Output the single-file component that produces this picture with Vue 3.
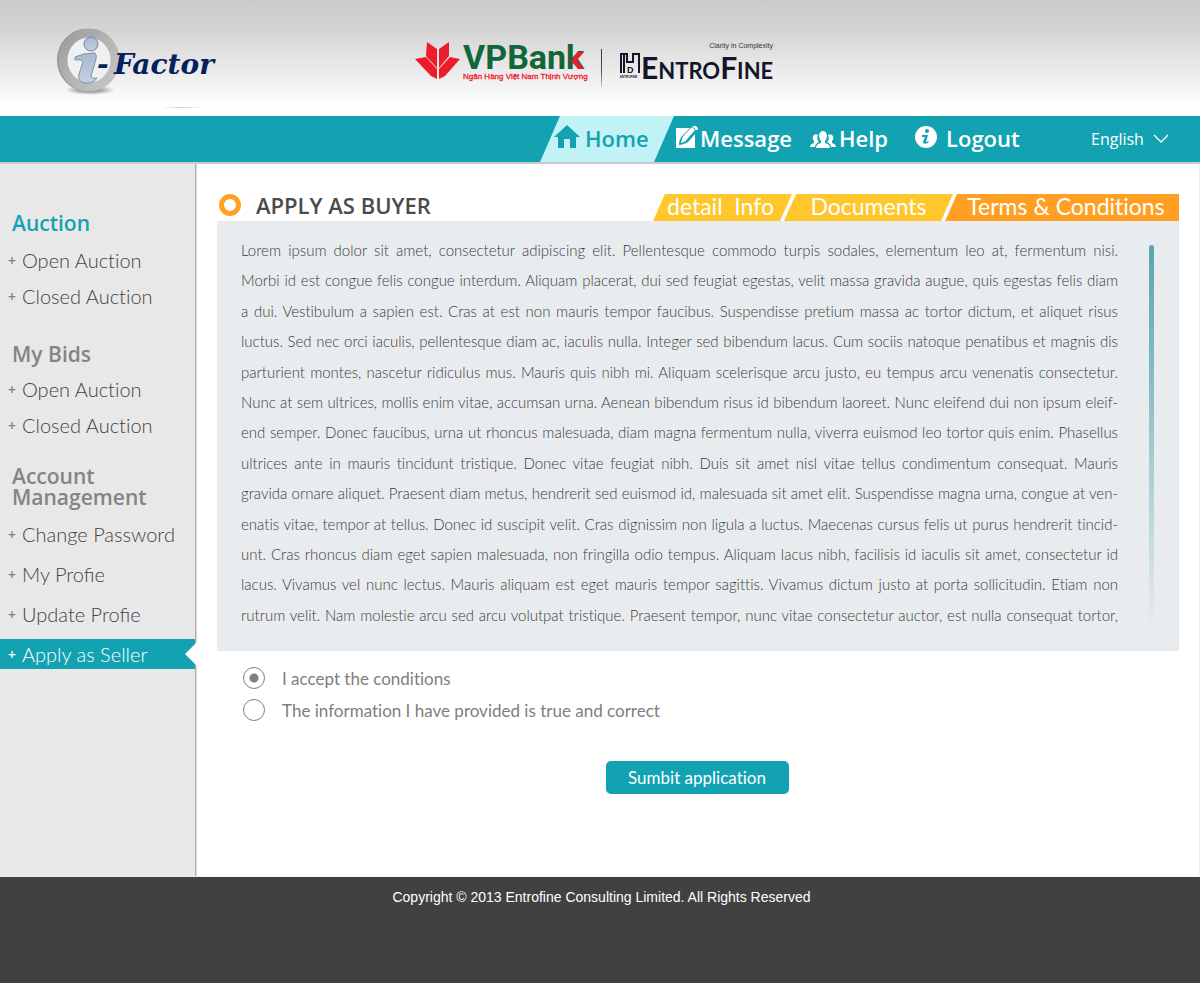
<script setup>
import { ref } from 'vue'

const groups = [
  { title: 'Auction', current: true, items: ['Open Auction', 'Closed Auction'] },
  { title: 'My Bids', items: ['Open Auction', 'Closed Auction'] },
  {
    title: 'Account Management',
    roomy: true,
    items: ['Change Password', 'My Profie', 'Update Profie', 'Apply as Seller'],
  },
]
const activeItem = 'Apply as Seller'

const terms = [
  'Lorem ipsum dolor sit amet, consectetur adipiscing elit. Pellentesque commodo turpis sodales, elementum leo at, fermentum nisi.',
  'Morbi id est congue felis congue interdum. Aliquam placerat, dui sed feugiat egestas, velit massa gravida augue, quis egestas felis diam',
  'a dui. Vestibulum a sapien est. Cras at est non mauris tempor faucibus. Suspendisse pretium massa ac tortor dictum, et aliquet risus',
  'luctus. Sed nec orci iaculis, pellentesque diam ac, iaculis nulla. Integer sed bibendum lacus. Cum sociis natoque penatibus et magnis dis',
  'parturient montes, nascetur ridiculus mus. Mauris quis nibh mi. Aliquam scelerisque arcu justo, eu tempus arcu venenatis consectetur.',
  'Nunc at sem ultrices, mollis enim vitae, accumsan urna. Aenean bibendum risus id bibendum laoreet. Nunc eleifend dui non ipsum eleif-',
  'end semper. Donec faucibus, urna ut rhoncus malesuada, diam magna fermentum nulla, viverra euismod leo tortor quis enim. Phasellus',
  'ultrices ante in mauris tincidunt tristique. Donec vitae feugiat nibh. Duis sit amet nisl vitae tellus condimentum consequat. Mauris',
  'gravida ornare aliquet. Praesent diam metus, hendrerit sed euismod id, malesuada sit amet elit. Suspendisse magna urna, congue at ven-',
  'enatis vitae, tempor at tellus. Donec id suscipit velit. Cras dignissim non ligula a luctus. Maecenas cursus felis ut purus hendrerit tincid-',
  'unt. Cras rhoncus diam eget sapien malesuada, non fringilla odio tempus. Aliquam lacus nibh, facilisis id iaculis sit amet, consectetur id',
  'lacus. Vivamus vel nunc lectus. Mauris aliquam est eget mauris tempor sagittis. Vivamus dictum justo at porta sollicitudin. Etiam non',
  'rutrum velit. Nam molestie arcu sed arcu volutpat tristique. Praesent tempor, nunc vitae consectetur auctor, est nulla consequat tortor,',
]

const choice = ref('accept')
const language = ref('English')
</script>

<template>
  <div class="page">
    <header class="brand">
      <a class="logo" href="#" aria-label="i-Factor">
        <svg width="180" height="90" viewBox="0 0 180 90">
          <defs>
            <linearGradient id="ring" x1="0" y1="0" x2="1" y2="1">
              <stop offset="0" stop-color="#9c9c9c" />
              <stop offset="0.5" stop-color="#b4b4b4" />
              <stop offset="1" stop-color="#c6c6c6" />
            </linearGradient>
            <linearGradient id="glass" x1="0" y1="0" x2="0" y2="1">
              <stop offset="0" stop-color="#a9b9cf" />
              <stop offset="1" stop-color="#c3d0e2" />
            </linearGradient>
            <radialGradient id="shade">
              <stop offset="0" stop-color="#444" stop-opacity="0.8" />
              <stop offset="1" stop-color="#444" stop-opacity="0" />
            </radialGradient>
            <linearGradient id="dash">
              <stop offset="0" stop-color="#ccc" stop-opacity="0" />
              <stop offset="0.5" stop-color="#ccc" />
              <stop offset="1" stop-color="#ccc" stop-opacity="0" />
            </linearGradient>
          </defs>
          <ellipse cx="42" cy="70" rx="25" ry="5" fill="url(#shade)" />
          <ellipse cx="38" cy="40" rx="25" ry="27" fill="none" stroke="#989898" stroke-width="8" />
          <ellipse cx="41" cy="40" rx="26" ry="27" fill="#eef0f2" stroke="url(#ring)" stroke-width="9" />
          <circle cx="43" cy="24" r="7" fill="url(#glass)" stroke="#72839b" />
          <path
            d="M27 37 Q35 33 47 33 Q49 35 48 39 L43 56 Q43 59 49 58 Q45 64 37 63 Q29 62 31 54 L35 42 Q34 39 27 40 Z"
            fill="url(#glass)" stroke="#8090a6"
          />
          <text class="logo-text" x="49" y="54">-</text>
          <text class="logo-text" x="66" y="54">Factor</text>
          <rect x="112" y="87" width="42" height="1" fill="url(#dash)" />
        </svg>
      </a>

      <a class="bank" href="#" aria-label="VPBank">
        <svg width="180" height="50" viewBox="0 0 180 50">
          <g fill="#ed1c2b">
            <path d="M12 3 L22 10 V29 L11 17 Z" />
            <path d="M34 3 L24 10 V29 L34 17 Z" />
            <path d="M0 20 L11 18 L22 30 V40 L16 37 Z" />
            <path d="M45 20 L35 18 L24 30 V40 L30 37 Z" />
          </g>
          <text class="bank-name" x="48" y="30">VPBank</text>
          <path d="M156 22 L163 13 L169 13 L162 21 L169 30 H163 Z" fill="#ed1c2b" />
          <text class="bank-line" x="48" y="40">Ngân Hàng Việt Nam Thịnh Vượng</text>
        </svg>
      </a>

      <span class="divider"></span>

      <a class="firm" href="#" aria-label="EntroFine">
        <svg width="160" height="50" viewBox="0 0 160 50">
          <text class="firm-tag" x="154" y="10" text-anchor="end">Clarity in Complexity</text>
          <path
            d="M2 35 V16 H8 V24 H14 V16 H20 V35 M5 16 V35"
            fill="none" stroke="#15152a" stroke-width="2"
          />
          <text class="firm-d" x="8" y="35">D</text>
          <text class="firm-mini" x="1" y="40">ENTROFINE</text>
          <text class="firm-name" x="22" y="41">E<tspan class="firm-small">NTRO</tspan>F<tspan class="firm-small">INE</tspan></text>
        </svg>
      </a>
    </header>

    <nav class="menu" aria-label="Main">
      <a class="menu-home" href="#">
        <svg width="26" height="24" viewBox="0 0 26 24">
          <path d="M13 0 L26 12 H22 V23 H16 V14 H10 V23 H4 V12 H0 Z" fill="#12a2b1" />
        </svg>
        <span>Home</span>
      </a>
      <a class="menu-message" href="#">
        <svg width="24" height="24" viewBox="0 0 24 24">
          <path d="M1 3 H15 L8 10 Q4 14 4 20 Q11 19 14 16 L20 9 V23 H1 Z" fill="#fff" />
          <path d="M6 18 Q7 12 10 9 L17 2 L20 5 L13 13 Q11 17 6 18 Z" fill="#fff" />
          <path d="M18 1 Q20 0 22 2 Q24 4 22 5 L21 5 L18 2 Z" fill="#fff" />
        </svg>
        <span>Message</span>
      </a>
      <a class="menu-help" href="#">
        <svg width="26" height="17" viewBox="0 0 26 17">
          <g fill="#fff">
            <path d="M0 16 Q0 13 4 12 V10 Q2 8 3 5 Q5 2 8 4 Q6 8 9 11 Q5 13 5 16 Z" />
            <path d="M26 16 Q26 13 22 12 V10 Q24 8 23 5 Q21 2 18 4 Q20 8 17 11 Q21 13 21 16 Z" />
            <path d="M6 17 Q6 13 11 12 V10 Q9 8 9 4 Q10 0 13 0 Q16 0 17 4 Q17 8 15 10 V12 Q20 13 20 17 Z" />
          </g>
        </svg>
        <span>Help</span>
      </a>
      <a class="menu-logout" href="#">
        <svg width="24" height="24" viewBox="0 0 24 24">
          <circle cx="12" cy="12" r="11" fill="#fff" />
          <circle cx="13" cy="6" r="2" fill="#12a2b1" />
          <path d="M8 10 H14 L12 17 L15 16 L14 18 Q9 20 9 17 L11 12 H8 Z" fill="#12a2b1" />
        </svg>
        <span>Logout</span>
      </a>
      <label class="language">
        <select v-model="language" aria-label="Language">
          <option>English</option>
        </select>
        <svg width="16" height="10" viewBox="0 0 16 10">
          <path d="M1 1 L8 8 L15 1" fill="none" stroke="#fff" stroke-width="1.3" />
        </svg>
      </label>
    </nav>

    <div class="body">
      <aside class="side">
        <section v-for="g in groups" :key="g.title" class="group" :class="{ roomy: g.roomy, current: g.current }">
          <h2>{{ g.title }}</h2>
          <ul>
            <li v-for="item in g.items" :key="item">
              <a href="#" :class="{ active: item === activeItem }"><i>+</i>{{ item }}</a>
            </li>
          </ul>
        </section>
      </aside>

      <main class="content">
        <div class="top">
          <h1><span class="ring"></span>APPLY AS BUYER</h1>
          <nav class="tabs" aria-label="Steps">
            <a class="tab first" href="#">detail&nbsp; Info</a>
            <a class="tab second" href="#">Documents</a>
            <a class="tab third" href="#">Terms &amp; Conditions</a>
          </nav>
        </div>

        <div class="terms">
          <div class="lines">
            <span v-for="line in terms" :key="line">{{ line }}</span>
          </div>
          <div class="track"></div>
        </div>

        <form class="agree" @submit.prevent>
          <label><input v-model="choice" type="radio" name="agree" value="accept" />I accept the conditions</label>
          <label><input v-model="choice" type="radio" name="agree" value="correct" />The information I have provided is true and correct</label>
          <button type="submit">Sumbit application</button>
        </form>
      </main>
    </div>

    <footer class="foot">Copyright © 2013 Entrofine Consulting Limited. All Rights Reserved</footer>
  </div>
</template>

<style>
body {
  margin: 0;
}
</style>

<style scoped>
.page {
  display: flex;
  flex-direction: column;
  min-height: 100vh;
  font-family: Lato, "Open Sans", sans-serif;
  font-variant-ligatures: none;
  background: #fff;
}
a {
  color: inherit;
  text-decoration: none;
}
svg {
  display: block;
  overflow: visible;
}

.brand {
  display: flex;
  height: 116px;
  box-sizing: border-box;
  padding: 20px 0 0 48px;
  background: linear-gradient(#cacaca, #d4d4d4 25%, #fff 92%);
}
.logo {
  margin-right: 187px;
}
.logo-text {
  font: italic bold 28px "DejaVu Serif", serif;
  fill: #06205f;
}
.bank {
  margin: 19px 6px 0 0;
}
.bank-name {
  font: bold 34px Roboto, sans-serif;
  fill: #11663a;
}
.bank-line {
  font: 8px "Liberation Sans", sans-serif;
  fill: #ed1c2b;
  stroke: #ed1c2b;
  stroke-width: 0.3px;
}
.divider {
  width: 1px;
  height: 38px;
  margin: 29px 17px 0 0;
  background: linear-gradient(#333, #555 60%, #ccc);
}
.firm {
  margin-top: 18px;
}
.firm-tag {
  font: 7px "Liberation Sans", sans-serif;
  fill: #333;
}
.firm-d {
  font: bold 9px "Liberation Sans", sans-serif;
  fill: #15152a;
}
.firm-mini {
  font: bold 3px "Liberation Sans", sans-serif;
  fill: #15152a;
}
.firm-name {
  font: bold 30px Lato, sans-serif;
  fill: #15152a;
}
.firm-small {
  font-size: 22px;
}

.menu {
  display: flex;
  align-items: center;
  height: 46px;
  padding-left: 45%;
  background: #12a2b1;
  color: #fff;
  font: 600 22px "Open Sans", sans-serif;
}
.menu a {
  display: flex;
  align-items: center;
}
.menu span {
  margin-bottom: 2px;
}
.menu .menu-home {
  width: 134px;
  height: 46px;
  box-sizing: border-box;
  padding-left: 14px;
  gap: 5px;
  color: #12a2b1;
  background: #c1f2f6;
  clip-path: polygon(20px 0, 100% 0, calc(100% - 20px) 100%, 0 100%);
}
.menu-home svg,
.menu-message svg,
.menu-logout svg {
  margin-bottom: 5px;
}
.menu-message {
  gap: 1px;
  width: 135px;
  margin-left: 1px;
}
.menu-help {
  gap: 3px;
  width: 104px;
}
.menu-logout {
  gap: 8px;
}
.language {
  display: flex;
  align-items: center;
  gap: 9px;
  margin: 0 31px 0 auto;
}
.language select {
  appearance: none;
  border: 0;
  padding: 0;
  background: none;
  color: #fff;
  font: 16px "Open Sans", sans-serif;
}

.body {
  display: flex;
  flex: 1;
  border-top: 2px solid #cbcbcb;
  border-bottom: 1px solid #f4f4f4;
}
.side {
  flex: none;
  width: 195px;
  padding-top: 49px;
  background: #e8e8e8;
  border-right: 1px solid #adadad;
  box-shadow: 1px 0 1px #ddd;
}
.group {
  margin-bottom: 23px;
}
.group.current {
  margin-bottom: 30px;
}
.group h2 {
  margin: 0 40px 6px 12px;
  font: 600 21px/21px "Open Sans", sans-serif;
  color: #848484;
}
.group.current h2 {
  margin-bottom: 8px;
  color: #12a2b1;
}
.group ul {
  margin: 0;
  padding: 0;
  list-style: none;
}
.group li {
  display: flex;
  align-items: center;
  height: 36px;
}
.roomy li {
  height: 40px;
  font-variant-ligatures: normal;
}
.group li a {
  flex: 1;
  display: flex;
  align-items: center;
  height: 30px;
  padding-left: 8px;
  font-weight: 300;
  font-size: 20px;
  color: #444;
}
.group i {
  width: 14px;
  font: 600 14px "Open Sans", sans-serif;
  color: #808080;
}
.group li a.active {
  position: relative;
  background: #12a2b1;
  color: #fff;
}
.group .active i {
  color: #fff;
}
.active::after {
  content: "";
  position: absolute;
  right: -2px;
  top: 3px;
  width: 12px;
  height: 24px;
  background: #fff;
  clip-path: polygon(100% 0, 0 50%, 100% 100%);
}

.content {
  flex: 1;
  min-width: 0;
  padding: 27px 20px 0 21px;
  border-right: 1px solid #f0f0f0;
}
.top {
  display: flex;
  justify-content: space-between;
  align-items: flex-end;
}
h1 {
  display: flex;
  align-items: center;
  gap: 15px;
  margin: 0 0 0 2px;
  font: 600 22px/28px "Open Sans", sans-serif;
  height: 30px;
  box-sizing: border-box;
  padding-bottom: 2px;
  color: #4b4b4b;
}
.ring {
  width: 12px;
  height: 12px;
  border: 5px solid #ffa024;
  border-radius: 50%;
}
.tabs {
  display: flex;
}
.tab {
  height: 27px;
  box-sizing: border-box;
  text-align: center;
  font-size: 23px;
  line-height: 25px;
  color: #fff;
  background: #ffc72c;
  clip-path: polygon(12px 0, 100% 0, calc(100% - 12px) 100%, 0 100%);
}
.first {
  width: 139px;
  padding-right: 4px;
}
.second {
  width: 169px;
  margin-left: -8px;
}
.third {
  width: 234px;
  margin-left: -8px;
  padding-left: 8px;
  background: #ffa024;
  clip-path: polygon(12px 0, 100% 0, 100% 100%, 0 100%);
}
.terms {
  display: flex;
  min-height: 430px;
  box-sizing: border-box;
  padding: 14px 25px 21px 24px;
  gap: 31px;
  background: #e8ecef;
}
.lines {
  flex: 1;
  display: flex;
  flex-direction: column;
  justify-content: space-between;
  font-size: 15px;
  font-weight: 300;
  line-height: 30px;
  color: #3c3c3c;
}
.lines span {
  white-space: nowrap;
  text-align: justify;
  text-align-last: justify;
}
.track {
  width: 5px;
  margin-top: 10px;
  border-radius: 3px;
  background: linear-gradient(#5aa5ae, #8fc0c7 40%, #e8ecef);
}
.agree {
  display: flex;
  flex-direction: column;
  align-items: flex-start;
  padding: 11px 0 30px 26px;
}
.agree label {
  display: flex;
  align-items: center;
  gap: 17px;
  height: 32px;
  font-size: 17px;
  color: #808080;
}
.agree input {
  appearance: none;
  width: 22px;
  height: 22px;
  margin: 0;
  border: 1px solid #808080;
  border-radius: 50%;
  background: #fff;
}
.agree input:checked {
  background: radial-gradient(circle, #808080 4px, #fff 5px);
}
.agree button {
  align-self: center;
  width: 183px;
  height: 33px;
  margin: 35px 28px 0 0;
  padding: 0;
  border: 0;
  border-radius: 5px;
  background: #12a2b1;
  color: #fff;
  font: 17px Lato, sans-serif;
  font-variant-ligatures: none;
}
.foot {
  height: 106px;
  box-sizing: border-box;
  padding: 12px 0 0 3px;
  text-align: center;
  background: #414141;
  color: #fff;
  font: 14px/17px "Liberation Sans", sans-serif;
}
</style>
